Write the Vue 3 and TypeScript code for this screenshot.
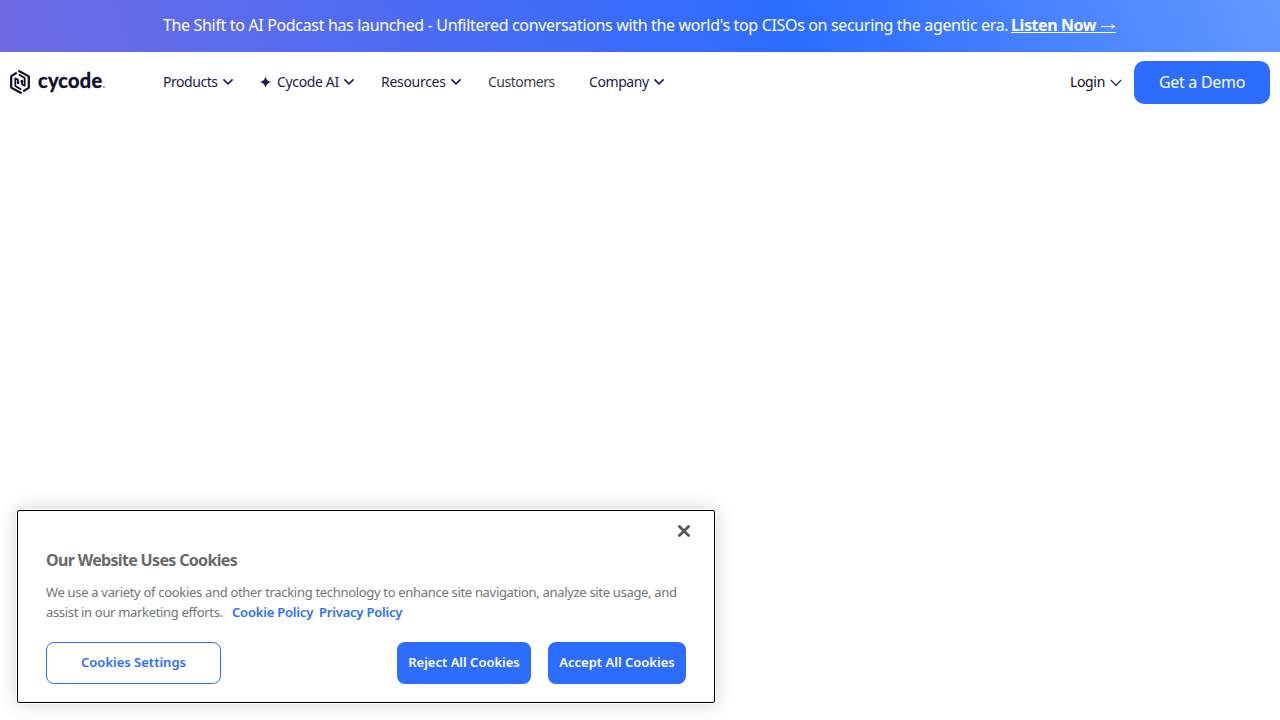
<script setup lang="ts">
interface NavItem {
  label: string
  key: string
  menu: boolean
  sparkle?: boolean
}

const navItems: NavItem[] = [
  { label: 'Products', key: 'products', menu: true },
  { label: 'Cycode AI', key: 'ai', menu: true, sparkle: true },
  { label: 'Resources', key: 'resources', menu: true },
  { label: 'Customers', key: 'customers', menu: false },
  { label: 'Company', key: 'company', menu: true },
]
</script>

<template>
  <div class="page">
    <div class="banner">
      <span class="banner-text">The Shift to AI Podcast has launched - Unfiltered conversations with the world's top CISOs on securing the agentic era.</span>
      <a class="banner-link"><span class="listen">Listen Now</span><svg width="20" height="14" viewBox="0 0 20 14"><path d="M5 6.5H18.5M15.5 4Q16.5 6 19 6.5Q16.5 7 15.5 9" /></svg></a>
    </div>

    <header class="header">
      <a class="logo">
        <svg class="mark" width="20" height="24" viewBox="0 0 20 24">
          <path d="M6.8 2.8L1.2 6.1V17.6L11.6 23.3" />
          <path d="M13.2 21.2L18.8 17.9V6.4L8.4 .7" />
          <path class="inner" d="M11.2 19.4L5.3 15.9V8.3L7.9 9.8V13" />
          <path class="inner" d="M8.8 4.6L14.7 8.1V15.7L12.1 14.2V11" />
          <circle cx="8.1" cy="12.8" r="1.4" />
          <circle cx="11.9" cy="11.2" r="1.4" />
        </svg>
        <span class="wordmark">cycode</span><i class="dot"></i>
      </a>
      <nav class="nav">
        <a v-for="item in navItems" :key="item.key" class="nav-item" :class="item.key">
          <svg v-if="item.sparkle" class="sparkle" width="12" height="12" viewBox="0 0 12 12"><path d="M5.5 .5Q6.5 5 11 6Q6.5 7 5.5 11.5Q4.5 7 0 6Q4.5 5 5.5 .5Z" /></svg>
          <span class="nav-label">{{ item.label }}</span>
          <svg v-if="item.menu" class="chevron" width="12" height="8" viewBox="0 0 12 8"><path d="M1.4 1.4L6 5.9L10.6 1.4" /></svg>
        </a>
      </nav>
      <div class="actions">
        <a class="login"><span class="login-label">Login</span><svg width="12" height="8" viewBox="0 0 12 8"><path d="M.8 .8L6 6.4L11.2 .8" /></svg></a>
        <button class="demo"><span>Get a Demo</span></button>
      </div>
    </header>

    <section class="cookie">
      <button class="close" aria-label="Close"><svg width="14" height="14" viewBox="0 0 14 14"><path d="M2.4 2.4L11.6 11.6M11.6 2.4L2.4 11.6" /></svg></button>
      <h2>Our Website Uses Cookies</h2>
      <p><span class="line-one">We use a variety of cookies and other tracking technology to enhance site navigation, analyze site usage, and</span></p>
      <p><span class="line-two">assist in our marketing efforts.</span><a class="cookie-policy">Cookie Policy</a><a class="privacy-policy">Privacy Policy</a></p>
      <div class="buttons">
        <button class="settings"><span>Cookies Settings</span></button>
        <button class="reject"><span>Reject All Cookies</span></button>
        <button class="accept"><span>Accept All Cookies</span></button>
      </div>
    </section>
  </div>
</template>

<style>
html, body { background: #fff; overflow: hidden; }
</style>

<style scoped>
* { box-sizing: border-box; }
.page {
  height: 720px;
  display: flex;
  flex-direction: column;
  font-family: "Noto Sans", sans-serif;
}
a, span { white-space: nowrap; }
svg { display: block; flex: none; fill: none; }
button { font-family: inherit; padding: 0; margin: 0; border: 0; display: flex; align-items: center; justify-content: center; }
.banner {
  height: 52px;
  flex: none;
  display: flex;
  align-items: center;
  padding: 0 0 2px 163px;
  color: #fff;
  font-size: 16px;
  background: linear-gradient(68deg, #706be5 0%, #2c6cff 62%, #6398ff 100%);
}
.banner-text { width: 848px; letter-spacing: -0.34px; }
.banner-link { display: flex; width: 105px; height: 22px; font-weight: 700; align-items: center; position: relative; }
.banner-link::after { content: ""; position: absolute; left: 0; right: 0; bottom: 3px; height: 1px; background: #fff; }
.listen { width: 85px; letter-spacing: -0.42px; }
.banner-link svg { stroke: #fff; stroke-width: 1; margin-top: 3px; }

.header { height: 61px; display: flex; align-items: center; padding: 0 10px; }
.logo { display: flex; width: 153px; height: 26px; align-items: center; }
.mark { stroke: #130b2b; stroke-width: 2.2; stroke-linejoin: round; margin-top: -2px; overflow: visible; }
.mark .inner { stroke-width: 1.8; }
.mark circle { fill: #130b2b; stroke: none; }
.wordmark { margin-left: 8px; width: 65px; font: 700 20px/24px "Lato", sans-serif; color: #130b2b; margin-top: -5px; letter-spacing: 0.25px; -webkit-text-stroke: .4px #130b2b; }
.dot { width: 2px; height: 2px; background: #8a8598; margin-top: 9px; border-radius: 1px; }
.nav { display: flex; height: 30px; }
.nav-item { display: flex; align-items: center; font-size: 14px; color: #211a4c; }
.nav-label { letter-spacing: -0.35px; margin-top: -2px; }
.products { width: 97px; }
.products .nav-label { width: 59px; letter-spacing: -0.45px; }
.ai { width: 121px; }
.sparkle { margin-right: 5px; margin-top: -2px; fill: #211a4c; }
.ai .nav-label { width: 66px; }
.resources { width: 107px; }
.resources .nav-label { width: 69px; letter-spacing: -0.3px; }
.customers { width: 101px; color: #3c3c46; }
.customers .nav-label { letter-spacing: -0.5px; }
.company .nav-label { width: 64px; letter-spacing: -0.42px; }
.chevron { stroke: #211a4c; stroke-width: 1.6; margin-top: -1px; }
.actions { display: flex; align-items: center; margin-left: auto; }
.login { display: flex; align-items: center; width: 64px; font-size: 14px; color: #130b2b; }
.login-label { width: 40px; letter-spacing: -0.35px; margin-top: -2px; }
.login svg { stroke: #130b2b; stroke-width: 1.1; margin-top: 1px; }
.demo { width: 136px; height: 43px; padding-bottom: 2px; border-radius: 10px; background: #2c6dff; color: #fff; font-size: 16px; letter-spacing: -0.3px; }

.cookie {
  position: absolute;
  left: 17px;
  top: 510px;
  width: 698px;
  height: 193px;
  padding: 39px 28px 0;
  border: 1px solid #000;
  border-radius: 2px;
  background: #fff;
  box-shadow: 0 0 0 1px #fff, 0 0 18px rgba(0, 0, 0, .2);
  font-size: 13px;
  color: #747474;
}
.close { position: absolute; right: 23px; top: 13px; background: none; }
.close svg { stroke: #565656; stroke-width: 2.8; stroke-linecap: round; }
h2 { margin: 0 0 11px; font: 700 16px/21px "Noto Sans", sans-serif; letter-spacing: -0.67px; white-space: nowrap; color: #696969; }
p { margin: 0; height: 20px; line-height: 20px; display: flex; }
.line-one { letter-spacing: -0.315px; }
.line-two { width: 186px; letter-spacing: -0.33px; }
p a { color: #2c6dff; font-weight: 600; letter-spacing: -0.2px; }
.cookie-policy { width: 87px; }
.buttons { display: flex; margin-top: 20px; }
.buttons button { height: 42px; padding-bottom: 2px; border-radius: 8px; background: #2c6dff; color: #fff; font-size: 13px; font-weight: 600; }
.buttons .settings { width: 175px; background: #fff; border: 1px solid #2c6dff; color: #2c6dff; }
.reject { width: 134px; margin-left: auto; }
.accept { width: 138px; margin-left: 17px; }
</style>
